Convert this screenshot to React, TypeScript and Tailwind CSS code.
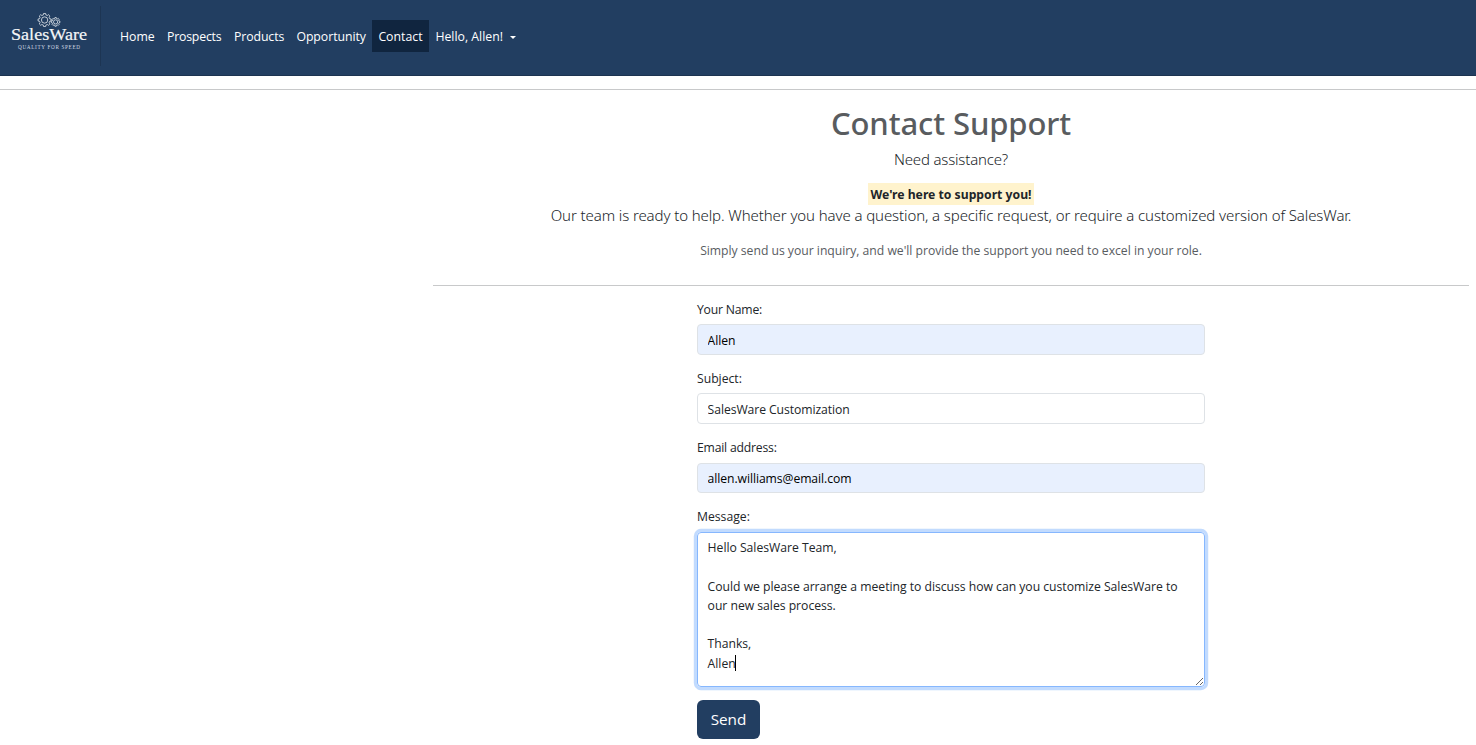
import type { ReactNode } from "react";

function Gear({ cx, cy, r, teeth }: { cx: number; cy: number; r: number; teeth: number }) {
  const points: string[] = [];
  const step = (Math.PI * 2) / teeth;
  for (let i = 0; i < teeth; i++) {
    const a = i * step;
    const corners: [number, number][] = [
      [-0.3, r * 0.8],
      [-0.2, r],
      [0.2, r],
      [0.3, r * 0.8],
    ];
    for (const [offset, radius] of corners) {
      const t = a + offset * step;
      points.push(`${(cx + Math.cos(t) * radius).toFixed(2)},${(cy + Math.sin(t) * radius).toFixed(2)}`);
    }
  }
  return (
    <g fill="none" stroke="#e3e8ee" strokeWidth="0.8">
      <polygon points={points.join(" ")} />
      <circle cx={cx} cy={cy} r={r * 0.48} />
    </g>
  );
}

function Logo() {
  return (
    <svg width="80" height="44" viewBox="0 0 80 44" className="block" aria-label="SalesWare">
      <Gear cx={35.6} cy={12} r={6.6} teeth={8} />
      <Gear cx={46.6} cy={13.9} r={4.4} teeth={8} />
      <text x="2" y="32" fontSize="17.4" textLength="76" lengthAdjust="spacingAndGlyphs" fill="#f4f6f8" stroke="#f4f6f8" strokeWidth="0.2" className="font-['Liberation_Serif',serif]">
        SalesWare
      </text>
      <text x="9" y="41.4" fontSize="5.2" textLength="62" lengthAdjust="spacing" fill="#d0d8e1" className="font-['Liberation_Serif',serif]">
        QUALITY FOR SPEED
      </text>
    </svg>
  );
}

function NavItem({ children, className }: { children: ReactNode; className: string }) {
  return (
    <a className={`flex h-8 items-center whitespace-nowrap pl-[6.4px] pt-[2px] text-[12.3px] text-white ${className}`}>{children}</a>
  );
}

function Field({ label, value, filled, className = "" }: { label: string; value: string; filled?: boolean; className?: string }) {
  return (
    <div className="mb-[13.6px]">
      <label className={`mb-[5.6px] block leading-[19.2px] ${className}`}>{label}</label>
      <input
        defaultValue={value}
        className={`block h-[30.8px] w-full rounded-[4px] border border-[#dee2e6] px-[9.6px] pt-[2px] tracking-[-0.08px] outline-none ${filled ? "bg-[#e8f0fe] text-black" : "bg-white"}`}
      />
    </div>
  );
}

const message = `Hello SalesWare Team,

Could we please arrange a meeting to discuss how can you customize SalesWare to our new sales process.

Thanks,
Allen`;

export default function App() {
  return (
    <div className="h-[745px] overflow-hidden bg-white font-['Open_Sans','Noto_Sans',sans-serif] text-[12.2px] text-[#212529]">
      <header className="flex h-[76px] border-b border-[#1c3350] bg-[#223e61]">
        <div className="mt-[6px] h-[60px] w-[101px] border-r border-[#1d3553] pl-[9px] pt-[2px]">
          <Logo />
        </div>
        <nav className="ml-[12.6px] mt-[20px] flex">
          <NavItem className="w-[47px]">Home</NavItem>
          <NavItem className="w-[67px] tracking-[-0.2px]">Prospects</NavItem>
          <NavItem className="w-[62.4px] tracking-[-0.1px]">Products</NavItem>
          <NavItem className="w-[82px] tracking-[-0.05px]">Opportunity</NavItem>
          <NavItem className="w-[57px] bg-[#10253f]">Contact</NavItem>
          <NavItem className="gap-[7px]">
            Hello, Allen!
            <span className="border-x-[3px] border-t-[3px] border-x-transparent border-t-white" />
          </NavItem>
        </nav>
      </header>

      <hr className="mt-[13px] border-[#c8c9ca]" />

      <main className="ml-[433px] w-[1036px]">
        <section className="flex flex-col items-center whitespace-nowrap border-b border-[#c8c9ca] pt-[14px] pb-[25px]">
          <h1 className="font-['Noto_Sans',sans-serif] text-[31px] font-medium leading-[38px] tracking-[-0.1px] text-[#595c5f]">Contact Support</h1>
          <p className="mt-[5px] font-['Noto_Sans',sans-serif] text-[15px] font-light leading-6 tracking-[-0.18px]">Need assistance?</p>
          <mark className="mt-[12px] h-[22px] bg-[#fff3cd] px-[2.4px] font-['Noto_Sans',sans-serif] text-[12.2px] font-bold leading-[24px] text-[#212529]">
            We&apos;re here to support you!
          </mark>
          <p className="-mt-[2px] font-['Noto_Sans',sans-serif] text-[15px] font-light leading-6 tracking-[-0.1px]">
            Our team is ready to help. Whether you have a question, a specific request, or require a customized version of SalesWar.
          </p>
          <p className="mt-[14px] leading-[19px] tracking-[-0.02px] text-[#595c5f]">
            Simply send us your inquiry, and we&apos;ll provide the support you need to excel in your role.
          </p>
        </section>

        <form className="ml-[264px] mt-[13.4px] w-[508px]">
          <Field label="Your Name:" value="Allen" filled className="translate-y-px tracking-[-0.2px]" />
          <Field label="Subject:" value="SalesWare Customization" />
          <Field label="Email address:" value="allen.williams@email.com" filled className="tracking-[-0.2px]" />
          <label className="mb-[5.6px] block leading-[19.2px]">Message:</label>
          <div className="relative">
            <textarea
              defaultValue={message}
              className="block h-[155px] w-full resize rounded-[4px] border border-[#86b7fe] px-[9.6px] py-[5.6px] leading-[19.2px] tracking-[-0.02px] shadow-[0_0_0_3.2px_rgba(13,110,253,0.25)] outline-none"
            />
            <span className="absolute left-[38px] top-[123px] h-[16px] w-px bg-black" />
          </div>
          <button type="button" className="mt-[12.8px] h-[39px] w-[63px] rounded-[6px] bg-[#223e61] text-[15.3px] text-white">
            Send
          </button>
        </form>
      </main>
    </div>
  );
}
